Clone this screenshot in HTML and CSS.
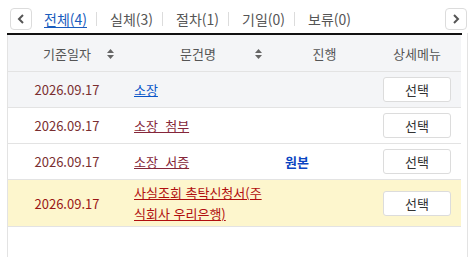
FILE: index.html
```html
<!DOCTYPE html>
<html lang="ko">
<head>
  <meta charset="UTF-8" />
  <title>문건 목록</title>
  <link rel="stylesheet" href="styles.css">
</head>
<body>
  <div class="tab-bar">
    <button class="arrow-btn" aria-label="이전">
      <svg width="8" height="10" viewBox="0 0 8 10"><path d="M6 1 L2 5 L6 9" fill="none" stroke="#555" stroke-width="2"/></svg>
    </button>
    <ul class="tabs">
      <li class="tab active">전체(4)</li>
      <li class="tab">실체(3)</li>
      <li class="tab">절차(1)</li>
      <li class="tab">기일(0)</li>
      <li class="tab">보류(0)</li>
    </ul>
    <button class="arrow-btn next" aria-label="다음">
      <svg width="8" height="10" viewBox="0 0 8 10"><path d="M2 1 L6 5 L2 9" fill="none" stroke="#555" stroke-width="2"/></svg>
    </button>
  </div>

  <div class="grid-box">
    <div class="top-line"></div>
    <table class="doc-table">
      <colgroup>
        <col class="c-date">
        <col class="c-name">
        <col class="c-state">
        <col class="c-menu">
      </colgroup>
      <thead>
        <tr>
          <th class="sortable s1">기준일자<span class="sort-icon"><svg width="7" height="10" viewBox="0 0 7 10"><path d="M3.5 0 L7 4 L0 4 Z M0 6 L7 6 L3.5 10 Z" fill="#666"/></svg></span></th>
          <th class="sortable s2">문건명<span class="sort-icon"><svg width="7" height="10" viewBox="0 0 7 10"><path d="M3.5 0 L7 4 L0 4 Z M0 6 L7 6 L3.5 10 Z" fill="#666"/></svg></span></th>
          <th class="state-head">진행</th>
          <th>상세메뉴</th>
        </tr>
      </thead>
      <tbody>
        <tr class="row-hover">
          <td class="date">2026.09.17</td>
          <td class="name"><a href="#" class="link blue">소장</a></td>
          <td class="state"></td>
          <td class="menu"><button class="select-btn">선택</button></td>
        </tr>
        <tr>
          <td class="date">2026.09.17</td>
          <td class="name"><a href="#" class="link">소장_첨부</a></td>
          <td class="state"></td>
          <td class="menu"><button class="select-btn">선택</button></td>
        </tr>
        <tr>
          <td class="date">2026.09.17</td>
          <td class="name"><a href="#" class="link">소장_서증</a></td>
          <td class="state"><span class="origin">원본</span></td>
          <td class="menu"><button class="select-btn">선택</button></td>
        </tr>
        <tr class="row-selected">
          <td class="date">2026.09.17</td>
          <td class="name"><a href="#" class="link red">사실조회 촉탁신청서(주식회사 우리은행)</a></td>
          <td class="state"></td>
          <td class="menu"><button class="select-btn">선택</button></td>
        </tr>
      </tbody>
    </table>
  </div>
</body>
</html>
```

FILE: styles.css
```css
* {
  margin: 0;
  padding: 0;
  box-sizing: border-box;
}

body {
  background: #fff;
  font-family: "Noto Sans CJK KR", "Noto Sans", sans-serif;
  font-size: 13px;
  color: #333;
  overflow: hidden;
}

.tab-bar {
  display: flex;
  align-items: center;
  padding: 8px 5px 0 10px;
  height: 30px;
}

.arrow-btn {
  width: 22px;
  height: 22px;
  border: 1px solid #dcdcdc;
  border-radius: 4px;
  background: #fff;
  display: flex;
  align-items: center;
  justify-content: center;
}

.arrow-btn.next {
  margin-left: auto;
}

.tabs {
  list-style: none;
  display: flex;
  align-items: center;
  margin-left: 12px;
}

.tab {
  font-size: 14px;
  line-height: 14px;
  color: #555;
  padding-right: 9px;
}

.tab + .tab {
  border-left: 1px solid #dcdcdc;
  padding-left: 13px;
}

.tab.active {
  color: #1a5cbd;
  text-decoration: underline;
  text-underline-offset: 2px;
}

.grid-box {
  margin: 3px 0 0 7px;
  width: 461px;
  height: 224px;
  border-left: 1px solid #e3e3e3;
  border-right: 1px solid #e3e3e3;
}

.top-line {
  height: 2px;
  background: #111;
  margin-left: -1px;
  width: 455px;
}

.doc-table {
  width: 453px;
  border-collapse: separate;
  border-spacing: 0;
  table-layout: fixed;
}

.c-date { width: 118px; }
.c-name { width: 144px; }
.c-state { width: 103px; }
.c-menu { width: 88px; }

.doc-table th {
  background: #f4f5f7;
  height: 37px;
  font-weight: normal;
  color: #555;
  font-size: 13px;
  border-bottom: 1px solid #e3e3e3;
  text-align: center;
}

.sortable {
  position: relative;
}

.sort-icon {
  position: absolute;
  top: 50%;
  margin-top: -4px;
  line-height: 0;
}

.s1 .sort-icon { right: 12px; }
.s2 .sort-icon { right: 8px; }

.state-head {
  padding-left: 6px;
}

.doc-table td {
  padding: 2px 8px;
  line-height: 21px;
  border-bottom: 1px solid #e3e3e3;
  vertical-align: middle;
}

.row-hover td {
  background: #f4f5f7;
}

.row-selected td {
  background: #fdf6cd;
}

.date {
  text-align: center;
  color: #7a2e30;
}

.row-selected .date {
  color: #9a1616;
}

.link {
  color: #85263a;
  text-decoration: underline;
}

.link.blue {
  color: #0a55c8;
}

.link.red {
  color: #b10f0f;
}

.state {
  padding-left: 15px !important;
}

.origin {
  color: #0a45c2;
  font-weight: bold;
}

.menu {
  text-align: center;
}

.select-btn {
  width: 68px;
  height: 25px;
  margin: 3px 0;
  border: 1px solid #dcdcdc;
  border-radius: 3px;
  background: #fff;
  font-family: inherit;
  font-size: 13px;
  color: #333;
  vertical-align: middle;
}
```
